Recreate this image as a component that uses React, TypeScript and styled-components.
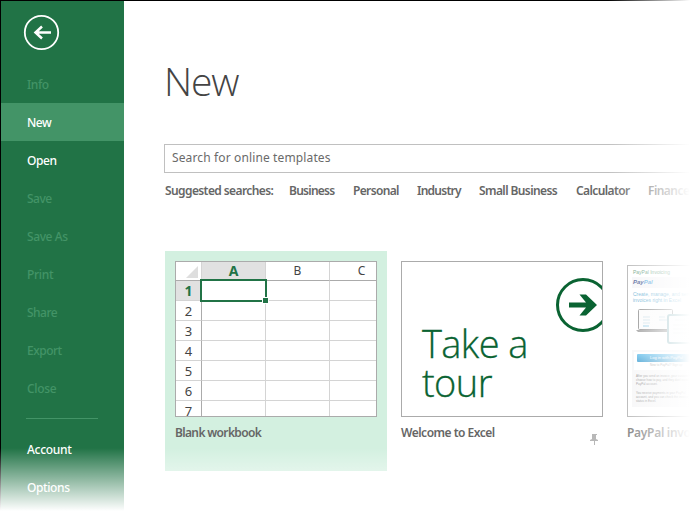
import React from 'react';
import styled, { createGlobalStyle, css } from 'styled-components';

const GlobalStyle = createGlobalStyle`
  *, *::before, *::after { box-sizing: border-box; }
  body { margin: 0; background: #fff; overflow: hidden; }
`;

const Page = styled.div`
  position: relative;
  display: flex;
  flex-direction: column;
  width: 692px;
  height: 512px;
  overflow: hidden;
  background: #fff;
  font-family: 'Noto Sans', 'Open Sans', sans-serif;
  color: #666;
`;

const TopEdge = styled.div`
  flex: none;
  height: 1px;
  background: #000;
`;

const Body = styled.div`
  display: flex;
  height: 511px;
`;

const BottomFade = styled.div`
  position: absolute;
  left: 0;
  right: 0;
  bottom: 0;
  height: 64px;
  background: linear-gradient(to bottom, rgba(255, 255, 255, 0), #fff 63px);
  pointer-events: none;
`;

const RightFade = styled.div`
  position: absolute;
  top: 0;
  right: 0;
  width: 84px;
  height: 512px;
  background: linear-gradient(to right, rgba(255, 255, 255, 0), #fff 82px);
  pointer-events: none;
`;

const Sidebar = styled.aside`
  flex: none;
  width: 124px;
  height: 511px;
  background: #217346;
  border-left: 1px solid #000;
`;

const BackButton = styled.button`
  display: block;
  margin: 13px 0 14px 22px;
  padding: 0;
  width: 37px;
  height: 37px;
  border: 0;
  background: none;
  svg { display: block; }
`;

const NavItem = styled.div<{ $state?: 'active' | 'disabled'; $spacing?: number }>`
  height: 38px;
  padding-left: 26px;
  font-size: 12px;
  line-height: 39px;
  font-weight: 500;
  letter-spacing: ${(p) => p.$spacing ?? 0}px;
  color: ${(p) => (p.$state === 'disabled' ? '#439467' : '#fff')};
  background: ${(p) => (p.$state === 'active' ? '#439467' : 'transparent')};
`;

const NavDivider = styled.div`
  width: 72px;
  height: 1px;
  margin: 11px 0 11px 25px;
  background: #439467;
`;

const Main = styled.main`
  flex: none;
  width: 568px;
  padding-left: 40px;
`;

const Title = styled.h1`
  margin: 52px 0 0;
  height: 56px;
  font-family: 'Open Sans', sans-serif;
  font-size: 39px;
  line-height: 55px;
  font-weight: 300;
  letter-spacing: -1.1px;
  color: #444;
`;

const SearchBox = styled.div`
  margin-top: 35px;
  height: 29px;
  padding-left: 7px;
  border: 1px solid #c0c0c0;
  border-right: 0;
  font-size: 12px;
  line-height: 26px;
  color: #6a6a6a;
  letter-spacing: 0.13px;
`;

const Suggestions = styled.div`
  display: flex;
  margin: 8px 0 0 1px;
  height: 20px;
  font-size: 12px;
  line-height: 20px;
  font-weight: 600;
  white-space: nowrap;
`;

const Suggestion = styled.span<{ $width: number; $spacing: number }>`
  flex: none;
  width: ${(p) => p.$width}px;
  letter-spacing: ${(p) => p.$spacing}px;
`;

const Templates = styled.div`
  display: flex;
  gap: 4px;
  margin: 50px 0 0 1px;
`;

const Card = styled.section<{ $selected?: boolean }>`
  position: relative;
  flex: none;
  width: 222px;
  height: 220px;
  padding: 10px;
  background: ${(p) => (p.$selected ? '#d3f0e0' : 'transparent')};
`;

const Preview = styled.div<{ $offset?: number }>`
  position: relative;
  width: 202px;
  height: ${(p) => 156 - (p.$offset ?? 0)}px;
  margin-top: ${(p) => p.$offset ?? 0}px;
  border: 1px solid #ababab;
  background: #fff;
  overflow: hidden;
`;

const Caption = styled.div<{ $spacing: number }>`
  margin-top: 6px;
  height: 20px;
  font-size: 12px;
  line-height: 20px;
  font-weight: 600;
  white-space: nowrap;
  letter-spacing: ${(p) => p.$spacing}px;
`;

const Sheet = styled.div`
  display: grid;
  grid-template-columns: 26px 64px 64px 64px;
  grid-template-rows: 19px repeat(7, 20px);
`;

const Cell = styled.div`
  border-right: 1px solid #d4d4d4;
  border-bottom: 1px solid #d4d4d4;
`;

const Header = styled.div<{ $active?: boolean; $kind: 'row' | 'col' | 'corner' }>`
  text-align: center;
  font-size: 13px;
  color: #444;
  border-right: 1px solid #d4d4d4;
  border-bottom: 1px solid #d4d4d4;
  ${(p) => p.$kind !== 'row' && css`line-height: 18px; font-size: 12px; border-bottom-color: #ababab;`}
  ${(p) => p.$kind === 'row' && css`line-height: 21px; border-right-color: #ababab;`}
  ${(p) => p.$active && css`background: #e1e1e1; color: #217346; font-weight: 700; font-size: 14px;`}
  ${(p) => p.$active && p.$kind === 'row' && css`line-height: 20px;`}
`;

const CornerMark = styled.svg`
  display: block;
  margin: 4px 0 0 10px;
`;

const Selection = styled.div`
  position: absolute;
  left: 24px;
  top: 17px;
  width: 67px;
  height: 23px;
  border: 2px solid #217346;
  &::after {
    content: '';
    position: absolute;
    right: -4px;
    bottom: -4px;
    width: 7px;
    height: 7px;
    background: #217346;
    border: 1px solid #fff;
  }
`;

const TourText = styled.div`
  position: absolute;
  left: 20px;
  top: 62px;
  font-family: 'Open Sans', sans-serif;
  font-size: 38px;
  line-height: 39px;
  font-weight: 300;
  color: #0a6332;
  letter-spacing: -0.6px;
  -webkit-text-stroke: 0.3px #0a6332;
`;

const TourArrow = styled.svg`
  position: absolute;
  left: 153px;
  top: 15px;
`;

const Pin = styled.svg`
  position: absolute;
  left: 199px;
  top: 183px;
`;

const Invoice = styled.div`
  height: 150px;
  padding: 0 4px;
  background: #fff;
  font-family: 'Liberation Sans', sans-serif;
  white-space: nowrap;
`;

const InvoiceName = styled.div`
  height: 11px;
  padding-left: 1px;
  font-size: 5px;
  line-height: 12px;
  color: #4a8c68;
`;

const InvoiceBrand = styled.div`
  height: 11px;
  padding-left: 1px;
  margin-bottom: 3px;
  background: #f4f4f6;
  font-size: 6px;
  line-height: 11px;
  font-weight: 700;
  font-style: italic;
  color: #253b80;
  span { color: #3b9bd8; }
`;

const InvoiceHeadline = styled.div`
  padding-left: 1px;
  height: 16px;
  font-size: 5px;
  line-height: 6.4px;
  color: #3f9dc9;
`;

const InvoiceArt = styled.svg`
  display: block;
  margin-left: 3px;
`;

const InvoiceForm = styled.div`
  margin-top: 6px;
  height: 57px;
  padding: 2px;
  background: #f5f5f6;
`;

const InvoiceLogin = styled.div`
  height: 18px;
  padding: 2px 3px 0;
  background: #fff;
  font-size: 3px;
  line-height: 7px;
  color: #888;
  span { padding-left: 13px; }
`;

const InvoiceButton = styled.div`
  height: 8px;
  padding-left: 13px;
  border-radius: 1px;
  background: linear-gradient(#47b4ea, #178ac7);
  color: #fff;
  font-size: 4px;
  line-height: 8px;
`;

const InvoiceText = styled.p`
  margin: 4px 2px 0;
  font-size: 3px;
  line-height: 4.2px;
  color: #777;
`;

const navigation: Array<{ label: string; state?: 'active' | 'disabled'; spacing?: number }> = [
  { label: 'Info', state: 'disabled', spacing: -0.4 },
  { label: 'New', state: 'active', spacing: -0.5 },
  { label: 'Open', spacing: -0.4 },
  { label: 'Save', state: 'disabled', spacing: -0.5 },
  { label: 'Save As', state: 'disabled', spacing: -0.4 },
  { label: 'Print', state: 'disabled', spacing: -0.3 },
  { label: 'Share', state: 'disabled', spacing: -0.5 },
  { label: 'Export', state: 'disabled', spacing: -0.5 },
  { label: 'Close', state: 'disabled', spacing: -0.3 },
];

const suggestions = [
  { label: 'Suggested searches:', width: 124, spacing: -0.6 },
  { label: 'Business', width: 64, spacing: -0.75 },
  { label: 'Personal', width: 64, spacing: -0.65 },
  { label: 'Industry', width: 62, spacing: -0.75 },
  { label: 'Small Business', width: 97, spacing: -0.6 },
  { label: 'Calculator', width: 72, spacing: -0.6 },
  { label: 'Finance', width: 44, spacing: -0.55 },
];

function Workbook() {
  return (
    <Sheet>
      <Header $kind="corner">
        <CornerMark width="12" height="12"><path d="M12 0V12H0Z" fill="#dedede" /></CornerMark>
      </Header>
      {['A', 'B', 'C'].map((c) => (
        <Header key={c} $kind="col" $active={c === 'A'}>{c}</Header>
      ))}
      {[1, 2, 3, 4, 5, 6, 7].map((row) => (
        <React.Fragment key={row}>
          <Header $kind="row" $active={row === 1}>{row}</Header>
          <Cell /><Cell /><Cell />
        </React.Fragment>
      ))}
    </Sheet>
  );
}

function Tour() {
  return (
    <>
      <TourText>Take a<br />tour</TourText>
      <TourArrow width="56" height="56" viewBox="0 0 56 56" fill="none">
        <circle cx="28" cy="28" r="25.500" stroke="#0a6332" strokeWidth="3" />
        <path d="M14 25.500H31L24.500 17.500H31L42 28L31 38.500H24.500L31 30.500H14Z" fill="#0a6332" />
      </TourArrow>
    </>
  );
}

function PayPalInvoice() {
  return (
    <Invoice>
      <InvoiceName>PayPal Invoicing</InvoiceName>
      <InvoiceBrand>Pay<span>Pal</span></InvoiceBrand>
      <InvoiceHeadline>Create, manage, and send<br />invoices right in Excel</InvoiceHeadline>
      <InvoiceArt width="66" height="37" viewBox="0 0 66 37">
        <rect x="3.500" y="2.500" width="34" height="20" rx="1" fill="#fafafa" stroke="#777" />
        <path d="M1 23H37V25H3Z" fill="#888" />
        <path d="M8 10H15M8 13H15M8 16H15M24 10H30M24 13H34" stroke="#c5dbe5" />
        <path d="M8 19H14" stroke="#69b9de" />
        <rect x="33" y="8" width="34" height="28" rx="2" fill="#f9fcfd" stroke="#7fb0b8" strokeWidth="2" />
        <path d="M40 13H50M38 18H56M38 22H56M38 26H56" stroke="#e5ebed" />
      </InvoiceArt>
      <InvoiceForm>
        <InvoiceLogin>
          <InvoiceButton>Log in with PayPal</InvoiceButton>
          <span>New to PayPal? Sign up</span>
        </InvoiceLogin>
        <InvoiceText>After you send an invoice, your customers can<br />choose how to pay, and they don't need a<br />PayPal account.</InvoiceText>
        <InvoiceText>You receive payments in your PayPal<br />account, and you can check the invoice<br />status in Excel.</InvoiceText>
      </InvoiceForm>
    </Invoice>
  );
}

export default function App() {
  return (
    <>
      <GlobalStyle />
      <Page>
        <TopEdge />
        <Body>
          <Sidebar>
            <BackButton aria-label="Back">
              <svg width="37" height="37" viewBox="0 0 37 37" fill="none">
                <circle cx="18.500" cy="18.500" r="16.700" stroke="#fff" strokeWidth="1.800" />
                <path d="M28 18.500H12M19 12.500L12.500 18.500L19 24.500" stroke="#fff" strokeWidth="2.500" />
              </svg>
            </BackButton>
            {navigation.map((item) => (
              <NavItem key={item.label} $state={item.state} $spacing={item.spacing}>{item.label}</NavItem>
            ))}
            <NavDivider />
            <NavItem $spacing={-0.3}>Account</NavItem>
            <NavItem $spacing={-0.4}>Options</NavItem>
          </Sidebar>
          <Main>
            <Title>New</Title>
            <SearchBox>Search for online templates</SearchBox>
            <Suggestions>
              {suggestions.map((s) => (
                <Suggestion key={s.label} $width={s.width} $spacing={s.spacing}>{s.label}</Suggestion>
              ))}
            </Suggestions>
            <Templates>
              <Card $selected>
                <Preview>
                  <Workbook />
                  <Selection />
                </Preview>
                <Caption $spacing={-0.65}>Blank workbook</Caption>
              </Card>
              <Card>
                <Preview><Tour /></Preview>
                <Caption $spacing={-0.5}>Welcome to Excel</Caption>
                <Pin width="9" height="11" viewBox="0 0 9 11">
                  <path d="M2 0H7V1H6V5L8 6V7H5V11H4V7H0V6L2 5V1Z" fill="#b8b8b8" />
                </Pin>
              </Card>
              <Card>
                <Preview $offset={4}><PayPalInvoice /></Preview>
                <Caption $spacing={-0.3}>PayPal invoicing</Caption>
              </Card>
            </Templates>
          </Main>
        </Body>
        <BottomFade />
        <RightFade />
      </Page>
    </>
  );
}
